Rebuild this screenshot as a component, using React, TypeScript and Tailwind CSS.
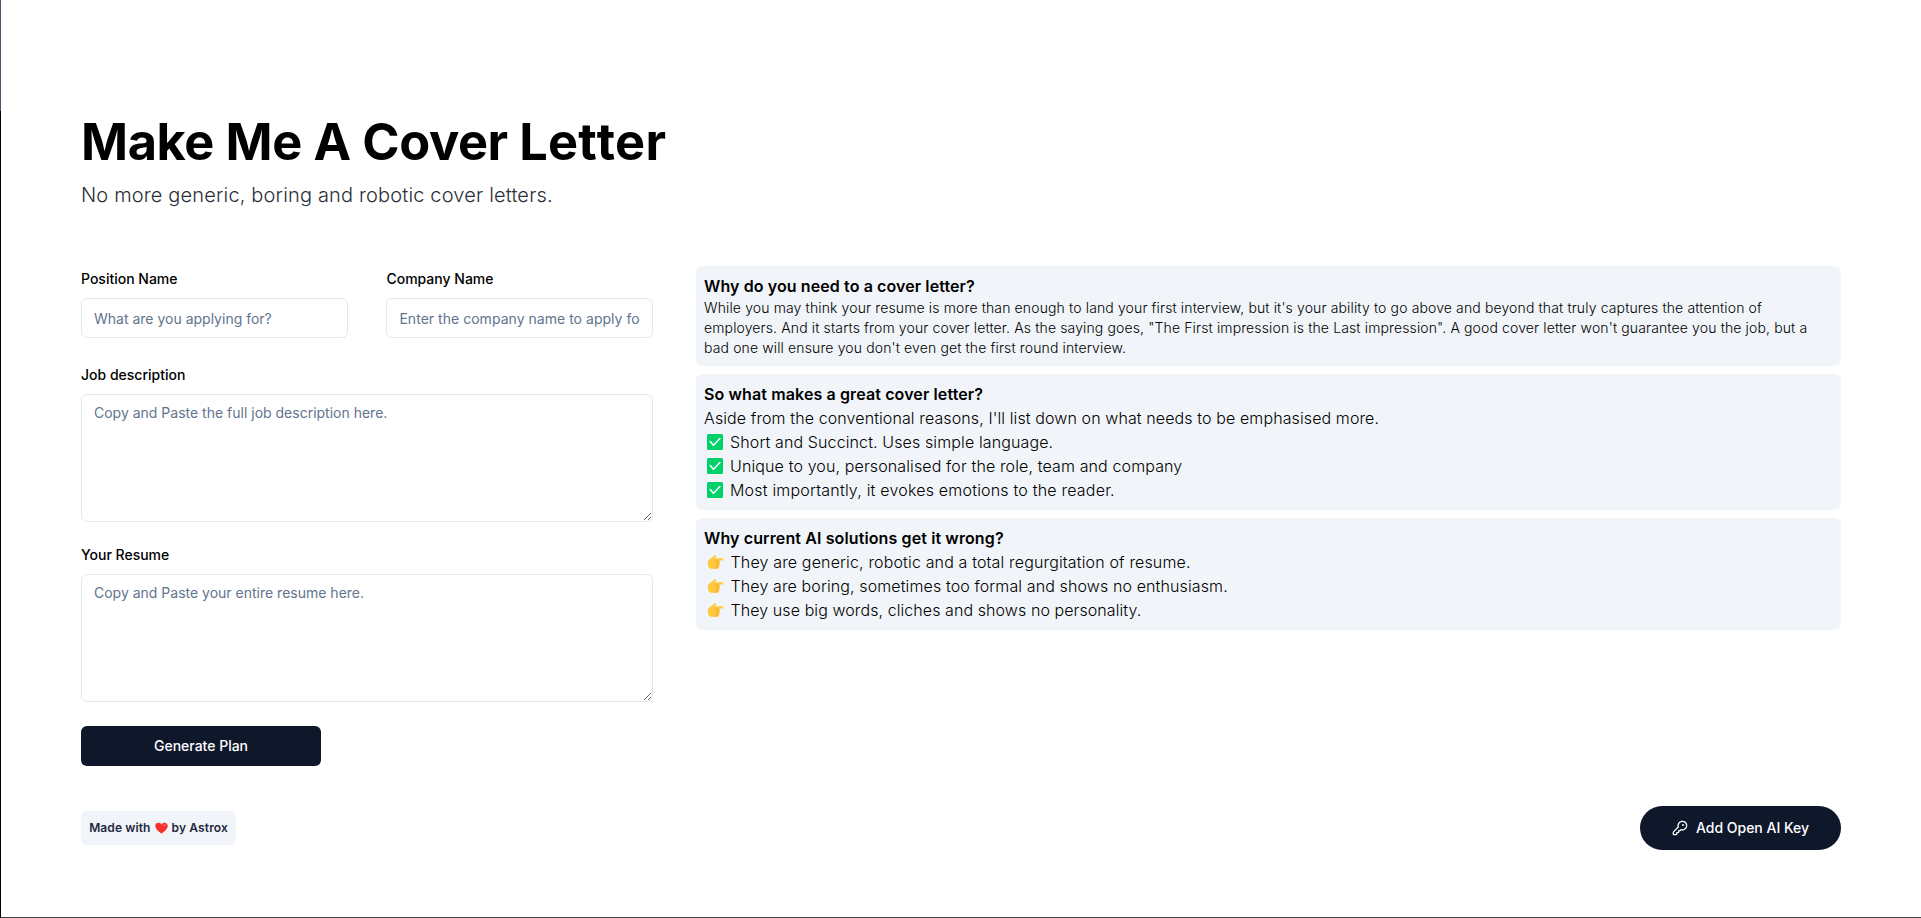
import { KeyRound } from "lucide-react";

const field =
  "w-full rounded-md border border-slate-200 bg-transparent px-3 text-sm placeholder:text-slate-500 focus:outline-none focus:ring-2 focus:ring-slate-400";
const labelText = "block text-sm leading-none font-medium text-black";

const strengths = [
  { text: "Short and Succinct. Uses simple language.", tracking: "tracking-[0.12px]" },
  { text: "Unique to you, personalised for the role, team and company", tracking: "tracking-[0.125px]" },
  { text: "Most importantly, it evokes emotions to the reader.", tracking: "tracking-[0.2px]" },
];

const problems = [
  { text: "They are generic, robotic and a total regurgitation of resume.", tracking: "tracking-[0.15px]" },
  { text: "They are boring, sometimes too formal and shows no enthusiasm.", tracking: "tracking-[0.115px]" },
  { text: "They use big words, cliches and shows no personality.", tracking: "tracking-[0.08px]" },
];

function CheckIcon() {
  return (
    <svg viewBox="0 0 16 16" className="h-4 w-4">
      <rect width="16" height="16" rx="1.5" fill="#00d26a" />
      <path d="M3.2 7.6l3.3 3.6 6.4-6.6" fill="none" stroke="#fff" strokeWidth="1.5" strokeLinecap="round" strokeLinejoin="round" />
    </svg>
  );
}

function PointIcon() {
  return (
    <svg viewBox="0 0 17 16" className="h-4 w-[17px]">
      <path
        d="M.8 9.2C.8 6.500 2 5.600 3.800 4.500L7.200 1.600C8 .9 9.300 1.200 9.200 2.300 9.100 3.100 8 3.900 7.900 4.300H15.300C16.900 4.300 16.900 6.500 15.300 6.500H11.800C13.500 6.700 13.400 8.700 12.200 8.900 13.300 9.300 13.100 11 11.900 11.200 12.800 11.700 12.400 13 11.500 13.200 11.800 14.300 11 15 10 15H6C2.700 15 .8 12.500.8 9.200Z"
        fill="#ffc83d"
      />
      <path d="M8.600 6.600H12M8.800 9H12.100M8.800 11.200H11.900M8.800 13.300H11.300" stroke="#d67d00" strokeWidth=".4" fill="none" />
    </svg>
  );
}

function HeartIcon() {
  return (
    <svg viewBox="0 0 14 12" className="h-3 w-[13px]">
      <path d="M7 12C4 10 .3 7 .3 3.600.3.300 5 -.8 7 2.100 9 -.8 13.700.300 13.700 3.600 13.700 7 10 10 7 12Z" fill="#f8312f" />
      <ellipse cx="10" cy="3" rx="1.600" ry="1.100" transform="rotate(-35 10 3)" fill="#f37366" />
    </svg>
  );
}

export default function App() {
  return (
    <div className="flex h-[918px] w-full bg-white font-[Inter,sans-serif] text-black">
      <div className="flex w-px shrink-0 flex-col bg-black">
        <div className="h-[111px] bg-slate-600" />
      </div>
      <main className="flex min-w-0 flex-1 flex-col border-b border-[#444] px-20 pt-28">
        <h1 className="h-[60px] text-[50.5px] leading-[60px] font-bold tracking-[-0.4px]">
          Make Me A Cover <span className="tracking-[0.1px]">Let</span><span className="tracking-[0.3px]">ter</span>
        </h1>
        <p className="mt-2 text-xl leading-[30px] font-light tracking-[0.165px] text-[#2b2f38]">No more generic, boring and robotic cover letters.</p>

        <div className="mt-14 grid grid-cols-[572px_1145px] justify-between">
          <form className="pt-1.5" onSubmit={(e) => e.preventDefault()}>
            <div className="grid grid-cols-[267px_266.6px] justify-between">
              <div>
                <label htmlFor="position" className={labelText}>Position Name</label>
                <input id="position" placeholder="What are you applying for?" className={`${field} mt-3 h-10`} />
              </div>
              <div>
                <label htmlFor="company" className={labelText}>Company Name</label>
                <input id="company" placeholder="Enter the company name to apply for" className={`${field} mt-3 h-10 tracking-[0.03px]`} />
              </div>
            </div>
            <label htmlFor="job" className={`${labelText} mt-[30px]`}>Job description</label>
            <textarea id="job" placeholder="Copy and Paste the full job description here." className={`${field} mt-3 block h-32 py-2`} />
            <label htmlFor="resume" className={`${labelText} mt-[26px]`}>Your Resume</label>
            <textarea id="resume" placeholder="Copy and Paste your entire resume here." className={`${field} mt-3 block h-32 py-2`} />
            <button className="mt-6 h-10 w-60 rounded-md bg-slate-900 text-sm font-medium text-white">Generate Plan</button>
          </form>

          <div className="flex flex-col gap-2 font-light">
            <section className="rounded-md bg-slate-100 p-2">
              <h2 className="font-semibold tracking-[0.1px]">Why do you need to a cover letter?</h2>
              <p className="text-sm tracking-[0.13px]">
                While you may think your resume is more than enough to land your first interview, but it's your ability to go above and beyond that truly captures the attention of employers. And it starts from your cover letter. As the saying goes, "The First impression is the Last impression". A good cover letter won't guarantee you the job, but a bad one will ensure you don't even get the first round interview.
              </p>
            </section>
            <section className="rounded-md bg-slate-100 p-2">
              <h2 className="font-semibold tracking-[0.115px]">So what makes a great cover letter?</h2>
              <p className="tracking-[0.105px]">Aside from the conventional reasons, I'll list down on what needs to be emphasised more.</p>
              <ul>
                {strengths.map(({ text, tracking }) => (
                  <li key={text} className={`flex items-center gap-[7px] pl-[3px] ${tracking}`}><CheckIcon />{text}</li>
                ))}
              </ul>
            </section>
            <section className="rounded-md bg-slate-100 p-2">
              <h2 className="font-semibold tracking-[0.115px]">Why current AI solutions get it wrong?</h2>
              <ul>
                {problems.map(({ text, tracking }) => (
                  <li key={text} className={`flex items-center gap-[6.5px] pl-[3px] ${tracking}`}><PointIcon />{text}</li>
                ))}
              </ul>
            </section>
          </div>
        </div>

        <footer className="mt-10 flex items-center justify-between">
          <div className="flex h-[34px] w-[155px] items-center justify-center gap-1 rounded-md bg-slate-100 text-xs font-semibold tracking-[0.12px] whitespace-nowrap text-slate-800">
            Made with <HeartIcon /> by Astrox
          </div>
          <button className="flex h-11 w-[201px] items-center justify-center gap-2 rounded-full bg-slate-900 text-sm font-medium text-white">
            <KeyRound className="h-4 w-4" />
            Add Open AI Key
          </button>
        </footer>
      </main>
    </div>
  );
}
